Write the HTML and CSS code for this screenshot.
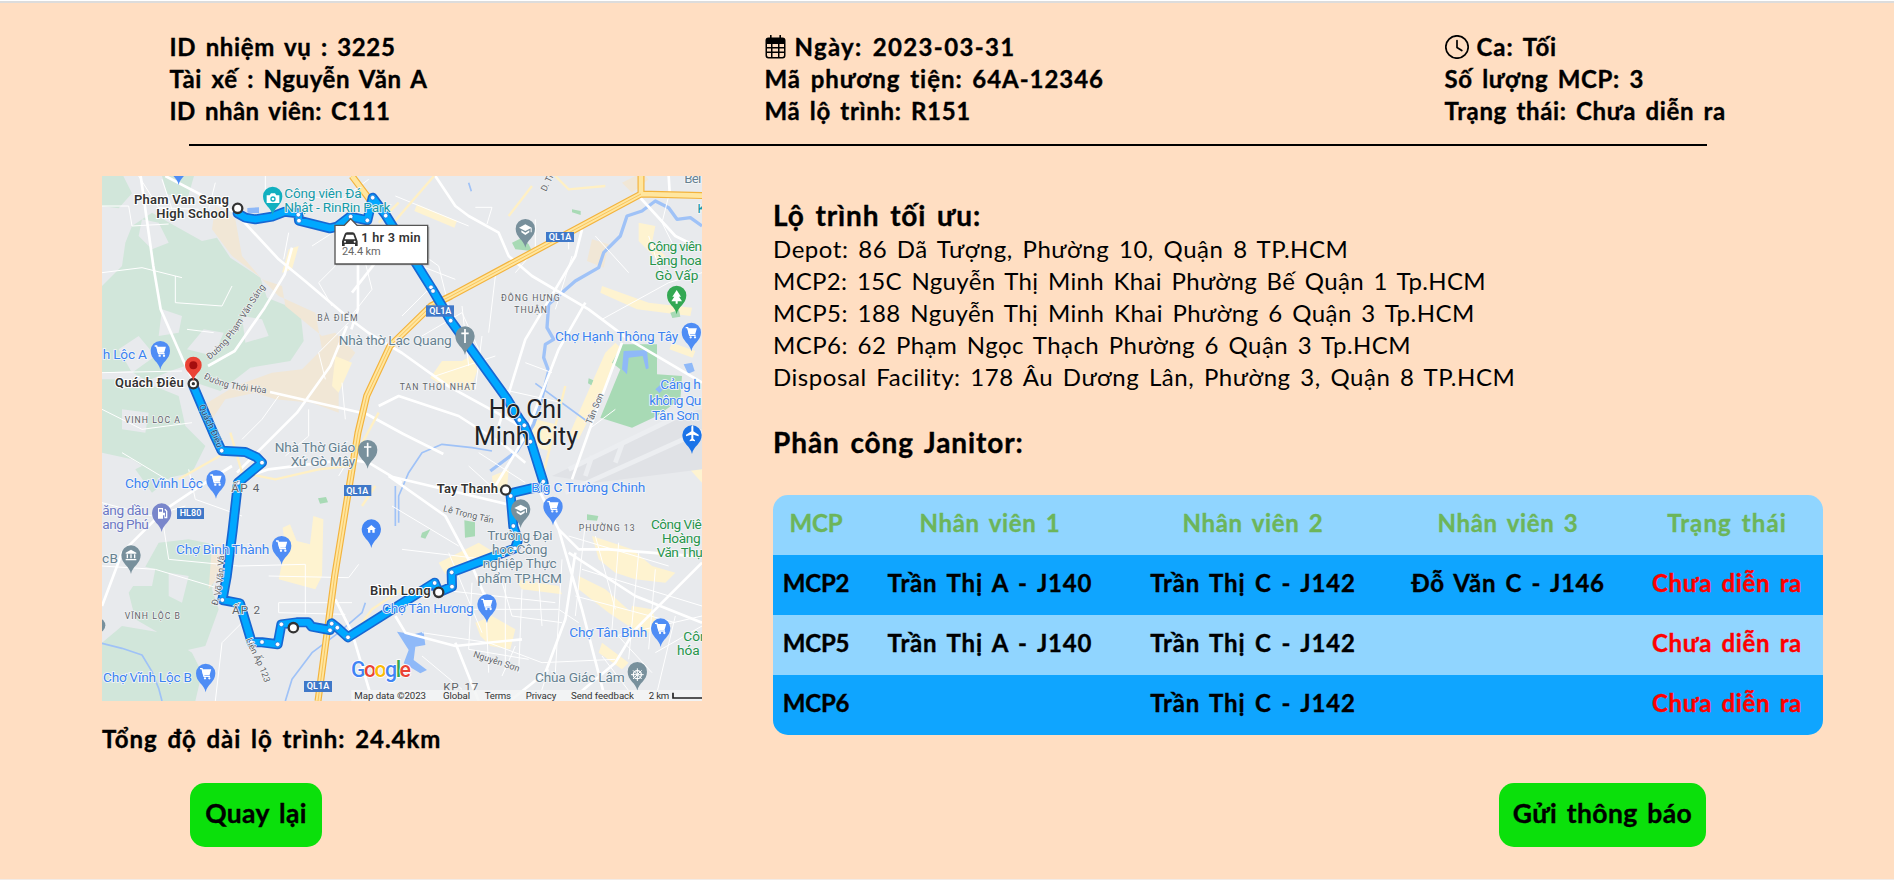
FILE: index.html
```html
<!DOCTYPE html>
<html lang="vi">
<head>
<meta charset="utf-8">
<title>Chi tiết nhiệm vụ</title>
<link rel="stylesheet" href="styles.css">
</head>
<body>
<header class="info">
  <div class="info-col">
    <p>ID nhiệm vụ : 3225</p>
    <p>Tài xế : Nguyễn Văn A</p>
    <p class="snug">ID nhân viên: C111</p>
  </div>
  <div class="info-col">
    <p class="date"><svg class="icon cal" viewBox="0 0 21 24"><path fill-rule="evenodd" d="M5 0.5a.8.8 0 0 1 1.6 0V2.500h7.800V.5a.8.8 0 0 1 1.600 0V2.500h1.500A3 3 0 0 1 20.500 5.500v15a3 3 0 0 1-3 3h-14a3 3 0 0 1-3-3v-15a3 3 0 0 1 3-3H5zM2 9v3h4V9zm5.500 0v3h5.500V9zm7 0v3H19V9zM2 13.500v3h4v-3zm5.500 0v3h5.500v-3zm7 0v3H19v-3zM2 18v2.300A1.700 1.700 0 0 0 3.700 22H6v-4zm5.500 0v4h5.500v-4zm7 0v4h2.800a1.700 1.700 0 0 0 1.700-1.700V18z"/></svg><span>Ngày: 2023-03-31</span></p>
    <p class="wide">Mã phương tiện: 64A-12346</p>
    <p>Mã lộ trình: R151</p>
  </div>
  <div class="info-col">
    <p class="wide"><svg class="icon clock" viewBox="0 0 24 24"><circle cx="12" cy="12" r="11.200"/><path d="M12 5.500v7l4.800 3"/></svg><span>Ca: Tối</span></p>
    <p>Số lượng MCP: 3</p>
    <p>Trạng thái: Chưa diễn ra</p>
  </div>
</header>
<hr class="rule">
<main class="content">
  <section class="map-side">
    <svg class="map" viewBox="0 0 1800 1575">
      <defs>
        <path id="pin" d="M0 0C-4-24-29-30-29-57a29 29 0 0 1 58 0C29-30 4-24 0 0z"/>
        <g id="cart" fill="none" stroke="#fff" stroke-width="4"><path d="M-17-71h6l6 23h18"/><path d="M-9-67h23l-4 14H-6z" fill="#fff"/><circle cx="-2" cy="-42" r="1.500"/><circle cx="11" cy="-42" r="1.500"/></g>
        <g id="shop"><use href="#pin" fill="#4f8df5"/><use href="#cart"/></g>
        <g id="school"><use href="#pin" fill="#78909c"/><path fill="#fff" d="M-19-60 0-70l19 10v14h-3v-12L0-50zM-12-52 0-45l12-7v6L0-38l-12-8z"/></g>
        <g id="church"><use href="#pin" fill="#78909c"/><path stroke="#fff" stroke-width="5" fill="none" d="M0-78v42M-11-65h22"/></g>
        <g id="stop"><circle r="14" fill="#fff" stroke="#333" stroke-width="7"/></g>
        <path id="r1" d="M322 552C420 480 440 380 520 300"/>
        <path id="r2" d="M304 606C360 640 430 645 520 655"/>
        <path id="r3" d="M346 1290C375 1200 360 1130 376 1030"/>
        <path id="r4" d="M432 1390C450 1440 480 1480 492 1540"/>
        <path id="r5" d="M1022 1006 1188 1046"/>
        <path id="r6" d="M1112 1442 1270 1494"/>
        <path id="r7" d="M1468 746 1512 640"/>
        <path id="r8" d="M1332 48 1365-20"/>
        <path id="r9" d="M290 690C310 740 335 780 350 830"/>
      </defs>
      <rect width="1800" height="1575" fill="#e8eaed"/>

      <!-- terrain -->
      <g fill="#d1e6da">
        <path d="M0 0h64l26 52-40 45L0 90zM180 0h96l-20 70-60-15zM90 150l60-40 60 35 90 50 45-10 40 60 90 60 20 60 100 40 10 90-40 60-120 20-90 70-60-20-30-60-60 20-70 30-50-30L0 590V330l60-60 10-70z"/>
        <path d="M0 610h90l90 30 50 20 20 90 60 60-40 80-90 20-90-60L0 830zM100 880l80-40 30 60-60 50zM170 1100l90-10 100 20-30 130 20 60-40 110-90 20-50-60-70-40-20-80 40-60zM0 1400l60-50 120 20 90 60 30 60-20 85H0z"/>
      </g>
      <g fill="#e8eaed">
        <path d="M120 130l50 10 30 60-50 20-40-40zM180 400l60 20-10 50-60 10zM50 520l60-40 50 60-70 50zM255 520l50-60 60 10-30 70zM420 420l60 10 20 50-70 20zM20 1180l60-20 80 20-10 50H40zM60 700l80 10-10 60-70-10zM200 1190l60 10-20 80-40-20z"/>
      </g>
      <g fill="#f1e7d6">
        <path d="M340 90l60 40 20 110 60 70 60 20 10 60 110 90 40-10 60 60-50 70v110l-80-30-110-10-60-20-90 20-40 60-30-40 100-60 110-40 90-10 60-60-20-110-110-50-60-60-80-60-60-80z"/>
        <path d="M1470 190l50 15-15 70-50-20zM330 1110l30-10-10 100-30 40zM1560 20l60-30 20 20-50 40z"/>
      </g>
      <g fill="#fef3d0">
        <path d="M550 1115l-8-60 22-10 20 50 40 10 10-85 30 10-4 170-20 40-110-30z"/>
        <path d="M945 85l120 50-8 20-120-50zM1020 555l60 0 35-20 10 50-20 60-90-20-30-20zM1300 730l60 15-20 80-60-20zM1540 500l20 20-50 110-30 60-50 100-30-10 70-160 40-90zM1500 330l140 50 130 15-5 25-160-20-110-50zM1610 140l50 10-10 50 40 40-20 15-60-60z"/>
        <path d="M1170 900l50-20-5 60-40 10zM1010 1160l120-60 40 25-20 20-120 50zM1470 1080l120 40 60 50 70 20-30 30-90-10-60-20-50-40zM1430 1200l80 40 90 80-20 30-60-40-90-70zM1240 1210l130 20 10 25-120-15zM1120 1340l50-20 70 40-15 60-60-10-30-30zM1590 1290l60 10 20 60-60 20-30-40zM1710 790l90 90v40l-100-110zM1500 1400l80 60-20 20-70-50zM700 540l50 20-40 90-20-20zM560 220l30-10-20 70-30 10zM1710 500l70 25-8 20-70-25z"/>
      </g>
      <path d="M1350 900l400-190 50-10v180l-320 40z" fill="#e0e2e6"/>
      <path d="M1400 880l340-165M1390 950l410-185M1450 900l20-60M1540 860l20-55" stroke="#eceef1" stroke-width="14" fill="none"/>
      <path fill="#a8dab5" d="M1560 505h105v90l75 5-5 70-70 50-75 35-95-30 60-145-25-20zM1410 100l26 5v12l-26-8zM1230 200l30-15 20 20 10 20-50-5zM1087 1033l32 6v42l-30 4zM960 1070l25-10-15 28-14-4zM1455 1015l34 5-4 14-30-2zM648 967l24-4 6 16-24 4zM1460 607l14 6-6 15-10-6zM1705 410l26-8 4 20-24 4z"/>

      <!-- water -->
      <g fill="none" stroke="#9fc2f7" stroke-width="8" stroke-linejoin="round">
        <path d="M1800 150l-35-25-40 5-25-35-40-20-40 30-45 15-20 60-50 50-15 45-70 40-80 70-5 70 20 35-25 15-5 40 15 40-15 60-10 40-20 60-50 80-80 60" stroke-width="10"/>
        <path d="M890 1040l0-80 30-70 40-60 60-25 90 10 60 10M1300 622l150 110M0 1402l60 15 60 20 30 50 20 50 10 38M550 1575l20-65 60-80 80-60 70-60 10-30M880 930v120M1100 20l8 26" stroke-width="5"/>
      </g>
      <path d="M1565 525l70-3 5 55-8 3-10-40-42 5-5 50-15-15zM1660 640l20-18 8 10-15 20zM885 1367l50 8 30-8 5 40-30 5-5 40 40 30-20 10-50-30 15-40zM1745 565l25-5 8 25-20 8zM436 96l35-2v18l-35-2z" fill="#8fb9f8"/>

      <!-- minor roads -->
      <g fill="none" stroke="#fff" stroke-width="3">
        <path d="M0 90h80l10 60 110-6M180 10l30 90M340 20l-20 80M110 0l60 95 120 5M0 290l120-15 120 30M220 300v80l140 10 30-60M255 460l80 10M0 590l240-5M0 700l120 60 150-20M260 880l20 90 140 50M0 980l150 40 100-30M180 1020l20 130 210 20 200-5v150M60 830l150 90M0 1170l160 10 200 60M500 1200l240 5 30-40M530 1280h220M530 1280v30l200 5M420 1340l-60 60-20 175"/>
        <path d="M490 0v80M560 170l-15 80M630 210l70-45M700 270l-50 50 40 70M740 440l-90 90 20 80M600 60l120 10 80-60M530 660l-50 70-60 60M620 700v80l-70 60M720 620l10 110M790 260l20 80-70 90M770 800l-60 100"/>
        <path d="M870 170l140 100 40 160 80 110M930 260l130 50M900 420l80-80M960 480l120-70 50 110M1000 600l180-60M1080 390l20 180M1140 480l-20 160M1180 300l-20 170M880 60l220 90M1120 94l50 0-15 50M1300 130v90l-60 70M1400 160v60M1410 240l-50 160M1480 180l100 110M1500 430l200-110 100-30M1640 180l40 120M1700 60l-20 80 40 80M1540 700l-80 60M1200 640l180 40M1270 560l80 30"/>
        <path d="M870 990l200 120M900 1120l250 30M1130 830l140 90M1100 870l100 90M1040 1130l100 240M1180 1150l50 170 150 20M1060 1300h310l60 40M1110 1220l-10 200 180 30M1150 1250l10 240M1210 1220v260M1260 1240l-10 250M1310 1210l10 140M1380 1150l-20 340M960 1370l200 30 160 60 220-10M1000 1240l360 40M1400 1080l300 90M1450 1040l-30 280M1480 1080l60 220M1550 1100l-20 260 120 130M1610 1130l-30 320M1660 1180l-20 240M1440 1180l360 110M1420 1260l300 80M1540 1380l260-60M1660 1430l140-80M1500 1440l100 130M1720 1320l-60 250M960 1440l120 100M1200 1500l40-90M1340 1480l-30 90"/>
      </g>
      <!-- main roads -->
      <g fill="none" stroke="#fff" stroke-width="8" stroke-linejoin="round">
        <path d="M116 0l38 270 22 130 66 150 30 60"/>
        <path d="M190 0l210 110 130 140 80 66 130 110 60 45 100 60 140 100 200 110 30 40"/>
        <path d="M570 215l-22 80-60 100-90 130-80 45"/>
        <path d="M504 648l290 66 110 60 120 60M735 450l-50 120-100 140-120 120-60 60"/>
        <path d="M768 260v140l-20 60M820 260l-70 90"/>
        <path d="M1000 0l60 90 40 30 90 50 30 70 70 60 170 100 120 90 220 130"/>
        <path d="M1440 160l-20 80-60 100-90 150-80 260M1450 380l-80 140-100 260-90 150M1560 500l-90 240-60 170"/>
        <path d="M1610 60l110 120 80 40M1700 0l3 50M830 690l60-30 180 60 140 90 60 50"/>
        <path d="M0 1290l60-160 130-130 120-80 80-50M410 910l90-30 240-30 60 10 100 60M860 900l170 120 80 150 60 140M860 900l420 100"/>
        <path d="M1310 940l60 120 60 60h90l280 22M1370 1060l70 240 70 270M1400 1130l200 130 200 80M1420 1130l-30 200-60 160-100 80M1800 1160l-200 200-60 100-130 110"/>
        <path d="M700 1270l50 100 60 200M880 1320l30 50 150 40 200-20M1060 1400l70 175"/>
      </g>
      <g fill="none" stroke="#fff0c4" stroke-width="7">
        <path d="M385 770l35 120 100 20 130-30 90-10M230 910l140-80M800 860l-30-40 60-110M890 80l-60 60M996 0l-130 150M1360 0l40 40 110-10M1290 30l-70 90M820 930l-40 60M1390 630l-70 280M900 1240l-90 60-60 80"/>
      </g>

      <!-- highways -->
      <g fill="none" stroke-linejoin="round">
        <path d="M1617 0v54l-570 306-60 30-123 120-70 150-26 110-70 430-50 375M1617 54l190 5M750 0l60 80" stroke="#f3b33d" stroke-width="21"/>
        <path d="M1617 0v54l-570 306-60 30-123 120-70 150-26 110-70 430-50 375M1617 54l190 5M750 0l60 80" stroke="#ffe69f" stroke-width="14"/>
        <path d="M1617 54l-570 306-60 30-123 120-70 150-26 110-70 430-50 375" stroke="#f3b33d" stroke-width="2"/>
      </g>

      <!-- route -->
      <g fill="none" stroke-linejoin="round" stroke-linecap="round">
        <path d="M407 112L430 125 460 130 510 122 549 107 589 112 591 134 684 157 705 152 744 122 796 133 812 65 851 117 989 337 1046 434 1214 667 1254 732 1267 749 1285 792 1324 917 1327 934 1289 937 1234 950 1226 960 1234 1052 1248 1092 1239 1117 1049 1189 1050 1232 1010 1249 998 1220 738 1384 706 1355 689 1342 684 1362 629 1352 619 1339 584 1339 538 1345 527 1405 480 1399 449 1399 414 1282 361 1272 374 1202 392 1062 408 920 480 860 464 844 430 828 359 824 339 782 274 630" stroke="#1767d2" stroke-width="30"/>
        <path d="M407 112L430 125 460 130 510 122 549 107 589 112 591 134 684 157 705 152 744 122 796 133 812 65 851 117 989 337 1046 434 1214 667 1254 732 1267 749 1285 792 1324 917 1327 934 1289 937 1234 950 1226 960 1234 1052 1248 1092 1239 1117 1049 1189 1050 1232 1010 1249 998 1220 738 1384 706 1355 689 1342 684 1362 629 1352 619 1339 584 1339 538 1345 527 1405 480 1399 449 1399 414 1282 361 1272 374 1202 392 1062 408 920 480 860 464 844 430 828 359 824 339 782 274 630" stroke="#00a8ff" stroke-width="20"/>
      </g>
      <g fill="#fff" stroke="#1767d2" stroke-width="2">
        <circle cx="589" cy="116" r="7"/><circle cx="591" cy="134" r="7"/><circle cx="746" cy="122" r="7"/><circle cx="796" cy="133" r="7"/><circle cx="812" cy="65" r="7"/><circle cx="851" cy="119" r="7"/><circle cx="987" cy="334" r="7"/><circle cx="993" cy="345" r="7"/><circle cx="1046" cy="434" r="7"/><circle cx="1252" cy="732" r="7"/><circle cx="1267" cy="748" r="7"/><circle cx="1285" cy="797" r="7"/><circle cx="1324" cy="917" r="7"/><circle cx="1325" cy="934" r="7"/><circle cx="1226" cy="960" r="7"/><circle cx="1234" cy="1050" r="7"/><circle cx="1239" cy="1117" r="7"/><circle cx="1049" cy="1189" r="7"/><circle cx="1050" cy="1232" r="7"/><circle cx="998" cy="1221" r="7"/><circle cx="738" cy="1384" r="7"/><circle cx="706" cy="1355" r="7"/><circle cx="689" cy="1343" r="7"/><circle cx="684" cy="1363" r="7"/><circle cx="538" cy="1345" r="7"/><circle cx="527" cy="1405" r="7"/><circle cx="480" cy="1398" r="7"/><circle cx="449" cy="1399" r="7"/><circle cx="361" cy="1272" r="7"/><circle cx="408" cy="920" r="7"/><circle cx="480" cy="860" r="7"/><circle cx="359" cy="824" r="7"/>
      </g>

      <!-- street names -->
      <g class="street">
        <text><textPath href="#r1">Đường Phạm Văn Sáng</textPath></text>
        <text><textPath href="#r2">Đường Thới Hòa</textPath></text>
        <text><textPath href="#r3">Đ. Võ Văn Vân</textPath></text>
        <text><textPath href="#r4">Liên Ấp 123</textPath></text>
        <text><textPath href="#r5">Lê Trọng Tấn</textPath></text>
        <text><textPath href="#r6">Nguyễn Sơn</textPath></text>
        <text><textPath href="#r7">Tân Sơn</textPath></text>
        <text><textPath href="#r8">D. Tr</textPath></text>
        <text class="on-route"><textPath href="#r9">Quách Điêu</textPath></text>
      </g>

      <!-- districts -->
      <g class="area">
        <text x="646" y="434" textLength="121">BÀ ĐIỂM</text>
        <text x="68" y="741" textLength="166">VINH LOC A</text>
        <text x="68" y="1329" textLength="166">VĨNH LỘC B</text>
        <text x="1197" y="374" textLength="176">ĐÔNG HƯNG</text>
        <text x="1237" y="412" textLength="98">THUẬN</text>
        <text x="893" y="643" textLength="228">TAN THOI NHAT</text>
        <text x="1430" y="1066" textLength="168">PHƯỜNG 13</text>
        <g class="big"><text x="388" y="948" textLength="84">ẤP 4</text><text x="390" y="1315" textLength="84">ẤP 2</text><text x="1024" y="1546" textLength="105">KP. 17</text></g>
      </g>

      <!-- road shields -->
      <g class="shield">
        <rect x="1332" y="168" width="84" height="30"/><text x="1340" y="192" textLength="68">QL1A</text>
        <rect x="972" y="388" width="84" height="34"/><text x="982" y="413" textLength="66">QL1A</text>
        <rect x="726" y="927" width="82" height="33"/><text x="733" y="953" textLength="66">QL1A</text>
        <rect x="606" y="1515" width="84" height="33"/><text x="614" y="1540" textLength="68">QL1A</text>
        <rect x="225" y="996" width="81" height="33"/><text x="233" y="1021" textLength="65">HL80</text>
      </g>

      <!-- places -->
      <use href="#pin" x="230" y="27" fill="#4f8df5"/>
      <use href="#pin" x="512" y="118" fill="#12b0c0"/><path d="M494 58h9l4-6h12l4 6h9v23h-38z" fill="#fff"/><circle cx="513" cy="69" r="8" fill="#12b0c0"/><circle cx="513" cy="69" r="4" fill="#fff"/>
      <use href="#shop" x="175" y="581"/><use href="#shop" x="342" y="968"/><use href="#shop" x="539" y="1166"/><use href="#shop" x="311" y="1549"/>
      <use href="#shop" x="1768" y="526"/><use href="#shop" x="1353" y="1048"/><use href="#shop" x="1155" y="1341"/><use href="#shop" x="1676" y="1413"/>
      <use href="#school" x="1270" y="215"/><use href="#school" x="1256" y="1056"/>
      <use href="#church" x="1089" y="537"/><use href="#church" x="797" y="878"/>
      <use href="#pin" x="1724" y="415" fill="#34a853"/><path d="M1724 342l13 20h-6l9 14h-13v7h-6v-7h-13l9-14h-6z" fill="#fff"/>
      <use href="#pin" x="1770" y="834" fill="#1a73e8"/><path d="M1768 752c2-6 5-6 6 0v14l16 10v5l-16-5v12l5 5v3l-8-2-8 2v-3l5-5v-12l-16 5v-5l16-10z" fill="#fff"/>
      <use href="#pin" x="808" y="1116" fill="#4285f4"/><path d="M808 1047l14 12h-4v11h-7v-8h-6v8h-7v-11h-4z" fill="#fff"/>
      <use href="#pin" x="179" y="1068" fill="#7986cb"/><path d="M168 1028v-32h15v14h6v12h3v-16l-5-5 3-3 6 7v22h-9v-9h-4v10zM171 1000v7h9v-7z" fill="#fff" fill-rule="evenodd"/>
      <use href="#pin" x="87" y="1194" fill="#78909c"/><path d="M71 1130l16-9 16 9v3H71zM74 1135h4v12h-4zM85 1135h4v12h-4zM96 1135h4v12h-4zM71 1149h32v4H71z" fill="#fff"/>
      <use href="#pin" x="1606" y="1544" fill="#78909c"/><g fill="none" stroke="#fff"><circle cx="1606" cy="1496" r="12" stroke-width="4"/><path d="M1606 1477v38M1587 1496h38M1593 1483l26 26M1619 1483l-26 26" stroke-width="3"/></g>
      <circle cx="-12" cy="1348" r="22" fill="#78909c"/>

      <g class="poi blue">
        <text x="2" y="549" textLength="133">h Lộc A</text>
        <text x="69" y="936" textLength="234">Chợ Vĩnh Lộc</text>
        <text x="222" y="1134" textLength="280">Chợ Bình Thành</text>
        <text x="3" y="1517" textLength="267">Chợ Vĩnh Lộc B</text>
        <text x="1359" y="495" textLength="370">Chợ Hạnh Thông Tây</text>
        <text x="1675" y="639" textLength="121">Cảng h</text><text x="1642" y="686" textLength="156">không Qu</text><text x="1650" y="732" textLength="142">Tân Sơn</text>
        <text x="1288" y="949" textLength="342">Big C Trường Chinh</text>
        <text x="840" y="1311" textLength="275">Chợ Tân Hương</text>
        <text x="1402" y="1383" textLength="234">Chợ Tân Bình</text>
      </g>
      <g class="poi violet"><text x="1" y="1017" textLength="139">ăng dầu</text><text x="1" y="1060" textLength="139">ang Phú</text></g>
      <g class="poi slate">
        <text x="0" y="1161" textLength="48">c B</text>
        <text x="710" y="506" textLength="339">Nhà thờ Lạc Quang</text>
        <text x="518" y="828" textLength="242">Nhà Thờ Giáo</text><text x="566" y="870" textLength="194">Xứ Gò Mây</text>
        <text x="1156" y="1092" textLength="196">Trường Đại</text><text x="1170" y="1134" textLength="166">học Công</text><text x="1142" y="1176" textLength="222">nghiệp Thực</text><text x="1126" y="1222" textLength="254">phẩm TP.HCM</text>
        <text x="1299" y="1517" textLength="269">Chùa Giác Lâm</text>
        <text x="1747" y="22" textLength="51">Bei</text>
      </g>
      <g class="poi teal"><text x="547" y="67" textLength="232">Công viên Đá</text><text x="547" y="109" textLength="318">Nhật - RinRin Park</text><text x="1786" y="112">K</text></g>
      <g class="poi green">
        <text x="1636" y="226" textLength="164">Công viên</text><text x="1642" y="268" textLength="157">Làng hoa</text><text x="1659" y="312" textLength="130">Gò Vấp</text>
        <text x="1647" y="1059" textLength="152">Công Viê</text><text x="1680" y="1101" textLength="116">Hoàng</text><text x="1664" y="1143" textLength="138">Văn Thụ</text>
        <text x="1744" y="1394">Côn</text><text x="1725" y="1436">hóa</text>
      </g>
      <g class="city"><text x="1160" y="727" textLength="220">Ho Chi</text><text x="1116" y="806" textLength="312">Minh City</text></g>

      <!-- stops -->
      <use href="#stop" x="407" y="97"/><use href="#stop" x="1211" y="942"/><use href="#stop" x="1010" y="1249"/><use href="#stop" x="574" y="1355"/>
      <use href="#stop" x="274" y="623"/><circle cx="274" cy="623" r="5" fill="#333"/>
      <path d="M274 616C270 590 249 590 249 567a25 25 0 0 1 50 0C299 590 278 590 274 616z" fill="#ea4335"/><circle cx="274" cy="568" r="12" fill="#a50e0e"/>
      <g class="wp">
        <text x="96" y="84" textLength="285">Pham Van Sang</text><text x="163" y="126" textLength="218">High School</text>
        <text x="39" y="634" textLength="206">Quách Điêu</text>
        <text x="1004" y="951" textLength="184">Tay Thanh</text>
        <text x="804" y="1257" textLength="182">Bình Long</text>
      </g>

      <!-- trip summary -->
      <path d="M702 152h280v116H702z" fill="#777" opacity=".5"/>
      <path d="M699 148h28l19-20 19 20h212v116H699z" fill="#fff" stroke="#555" stroke-width="4"/>
      <path d="M720 196l8-22q2-5 7-5h17q5 0 7 5l8 22v14h-8v-6h-31v6h-8zM728 190h31l-5-14h-21z" fill="#333" fill-rule="evenodd"/><circle cx="729" cy="197" r="3" fill="#fff"/><circle cx="758" cy="197" r="3" fill="#fff"/>
      <text class="eta" x="778" y="198" textLength="178">1 hr 3 min</text>
      <text class="km" x="720" y="237" textLength="116">24.4 km</text>

      <!-- attribution -->
      <g class="google"><text x="747" y="1503" textLength="180"><tspan fill="#4285f4">G</tspan><tspan fill="#ea4335">o</tspan><tspan fill="#fbbc04">o</tspan><tspan fill="#4285f4">g</tspan><tspan fill="#34a853">l</tspan><tspan fill="#ea4335">e</tspan></text></g>
      <path d="M748 1542h1052v33H748z" fill="#f3f4f5" opacity=".85"/>
      <g class="legal">
        <text x="757" y="1568" textLength="215">Map data ©2023</text><text x="1023" y="1568" textLength="81">Global</text><text x="1148" y="1568" textLength="79">Terms</text><text x="1271" y="1568" textLength="92">Privacy</text><text x="1407" y="1568" textLength="189">Send feedback</text><text x="1640" y="1568" textLength="62">2 km</text>
      </g>
      <path d="M1713 1550v16h87" fill="none" stroke="#222" stroke-width="5"/>
    </svg>
    <p class="total wide">Tổng độ dài lộ trình: 24.4km</p>
  </section>
  <section class="route-side">
    <h2>Lộ trình tối ưu:</h2>
    <ul class="stops">
      <li class="depot">Depot: 86 Dã Tượng, Phường 10, Quận 8 TP.HCM</li>
      <li class="first">MCP2: 15C Nguyễn Thị Minh Khai Phường Bế Quận 1 Tp.HCM</li>
      <li>MCP5: 188 Nguyễn Thị Minh Khai Phường 6 Quận 3 Tp.HCM</li>
      <li>MCP6: 62 Phạm Ngọc Thạch Phường 6 Quận 3 Tp.HCM</li>
      <li class="depot">Disposal Facility: 178 Âu Dương Lân, Phường 3, Quận 8 TP.HCM</li>
    </ul>
    <h2 class="assign">Phân công Janitor:</h2>
    <table class="janitors">
      <colgroup><col class="k1"><col class="k2"><col class="k3"><col class="k4"><col class="k5"></colgroup>
      <tr><th class="id">MCP</th><th>Nhân viên 1</th><th>Nhân viên 2</th><th>Nhân viên 3</th><th class="state">Trạng thái</th></tr>
      <tr><td class="id">MCP2</td><td class="name">Trần Thị A - J140</td><td class="name">Trần Thị C - J142</td><td>Đỗ Văn C - J146</td><td class="status">Chưa diễn ra</td></tr>
      <tr><td class="id">MCP5</td><td class="name">Trần Thị A - J140</td><td class="name">Trần Thị C - J142</td><td></td><td class="status">Chưa diễn ra</td></tr>
      <tr><td class="id">MCP6</td><td></td><td class="name">Trần Thị C - J142</td><td></td><td class="status">Chưa diễn ra</td></tr>
    </table>
  </section>
</main>
<footer class="actions">
  <button class="btn back">Quay lại</button>
  <button class="btn send">Gửi thông báo</button>
</footer>
</body>
</html>
```
FILE: styles.css
```css
* { box-sizing: border-box; margin: 0; padding: 0; }
body {
  height: 880px;
  overflow: hidden;
  background: #ffdec2;
  border-top: 1px solid #fff;
  border-bottom: 1px solid #f1ece8;
  box-shadow: inset 0 2px #dcdcdc;
  color: #000;
  font: 700 24px/32px Lato, "Open Sans", sans-serif;
  -webkit-text-stroke: .35px currentColor;
  letter-spacing: .65px;
  word-spacing: 3px;
  white-space: nowrap;
}
.wide { letter-spacing: .95px; }
.snug { letter-spacing: .44px; }
.info {
  display: grid;
  grid-template-columns: 595px 680px 1fr;
  padding: 30px 0 0 169.5px;
}
.info-col p { height: 32px; display: flex; align-items: flex-start; }
.info-col .date { letter-spacing: 1.34px; }
.icon { flex: none; height: 24px; margin-top: 4px; }
.cal { width: 21px; margin-right: 9px; }
.clock { width: 24px; margin-right: 8px; fill: none; stroke: #000; stroke-width: 1.7; stroke-linecap: round; stroke-linejoin: round; }
.rule { width: 1518px; height: 2px; margin: 17px 0 30px 189px; border: 0; background: #000; }
.content { display: flex; gap: 71px; padding-left: 102px; height: 607px; }
.map-side { width: 600px; }
.map { display: block; width: 600px; height: 525px; overflow: hidden; font-family: Roboto, sans-serif; font-weight: 400; letter-spacing: 0; word-spacing: 0; -webkit-text-stroke: 0; }
.total { margin-top: 22px; }
.route-side { width: 1050px; padding-top: 21px; }
h2 { font-size: 28px; line-height: 36px; letter-spacing: .9px; }
.stops { list-style: none; font-weight: 400; letter-spacing: .46px; -webkit-text-stroke: 0; }
.depot { letter-spacing: .55px; }
.first { letter-spacing: .36px; }
.assign { margin-top: 31px; }
.janitors { width: 1050px; margin-top: 35px; border-collapse: collapse; table-layout: fixed; border-radius: 15px; overflow: hidden; text-align: center; }
.janitors tr { height: 60px; background: #90d5ff; }
.janitors tr:nth-child(even) { background: #0fa5ff; }
.janitors th, .janitors td { height: 60px; padding: 12px 0 16px; }
.janitors th { color: #6cb55a; }
.janitors .name { letter-spacing: .85px; }
.janitors .id { letter-spacing: -.2px; }
.janitors .state { letter-spacing: 1.1px; }
.janitors .status { color: #f00; }
.k1 { width: 86px; }
.k2 { width: 262px; }
.k3 { width: 264px; }
.k4 { width: 246px; }
.k5 { width: 192px; }
.actions { display: flex; justify-content: space-between; padding: 0 188px 0 190px; }
.btn { height: 64px; padding: 12px 0 16px; border: 0; border-radius: 15px; background: #0be00b; color: #000; font: inherit; font-size: 26.5px; line-height: 36px; letter-spacing: .35px; word-spacing: 3px; }
.back { width: 132px; }
.send { width: 207px; }

.street { font-size: 27px; fill: #5f6368; paint-order: stroke; stroke: #f1f3f4; stroke-width: 4px; }
.on-route { fill: #24476b; stroke: #7cc6fa; }
.area { font-size: 26px; fill: #5f6368; paint-order: stroke; stroke: #f1f3f4; stroke-width: 4px; }
.area .big { font-size: 35px; }
.shield rect { fill: #3f78c8; }
.shield text { font-size: 27px; font-weight: 600; fill: #fff; }
.poi { font-size: 41px; paint-order: stroke; stroke: #f4f6f8; stroke-width: 5px; }
.blue { fill: #3b82f0; }
.violet { fill: #6b77c4; }
.slate { fill: #668190; }
.teal { fill: #149aa8; }
.green { fill: #27944a; }
.city { font-size: 75px; fill: #202124; paint-order: stroke; stroke: #f1f3f4; stroke-width: 5px; }
.wp { font-size: 39px; font-weight: 600; fill: #333; paint-order: stroke; stroke: #fff; stroke-width: 6px; }
.eta { font-size: 38px; font-weight: 600; fill: #333; }
.km { font-size: 33px; fill: #666; }
.google { font-size: 64px; font-weight: 500; paint-order: stroke; stroke: #fff; stroke-width: 5px; }
.legal { font-size: 29px; fill: #333; }
```
